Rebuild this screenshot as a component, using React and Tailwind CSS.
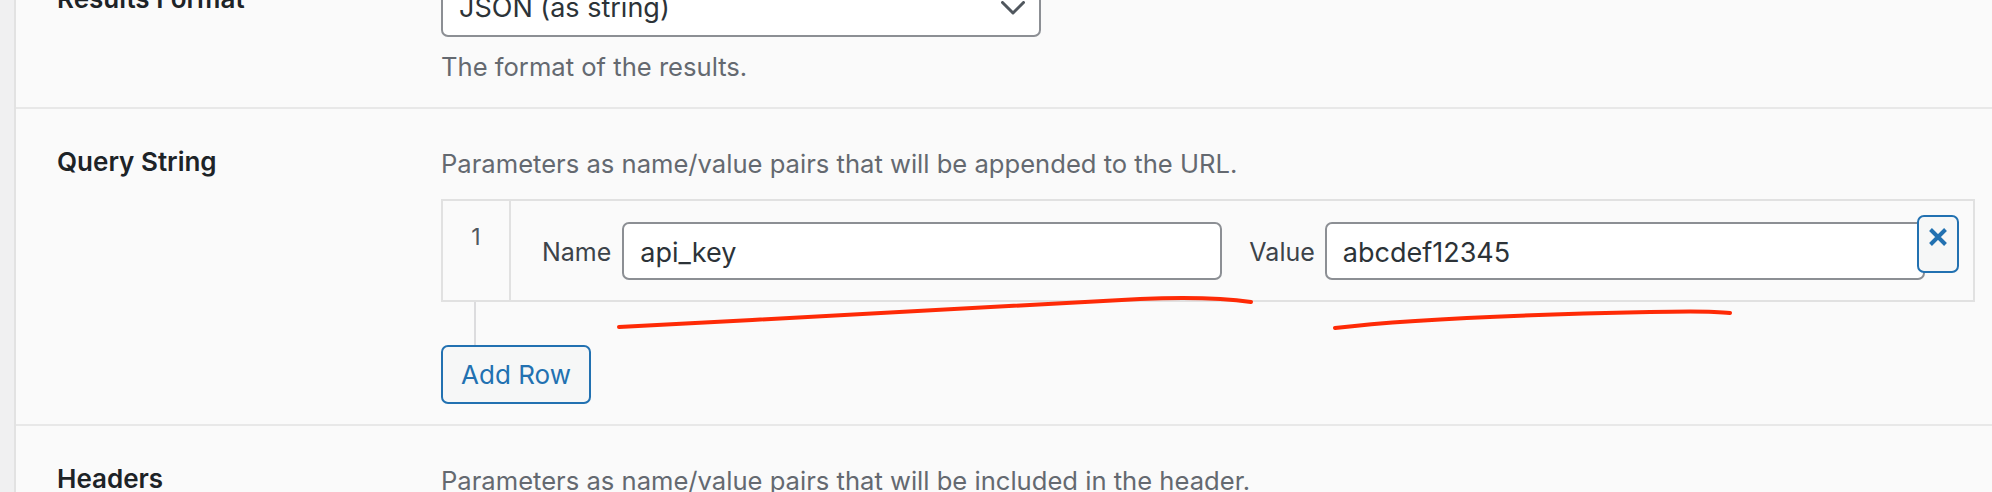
import React from "react";

const Section = ({ label, children, className = "", labelClass = "" }) => (
  <div className={`flex border-b-2 border-[#e8e8e8] pl-[41px] ${className}`}>
    <div className={`w-[384px] shrink-0 text-[26px] leading-[30px] font-semibold text-[#1d2327] ${labelClass}`}>
      {label}
    </div>
    <div className="flex-1">{children}</div>
  </div>
);

const Description = ({ children, className = "" }) => (
  <p className={`text-[25.6px] leading-[36px] text-[#646970] ${className}`}>{children}</p>
);

const TextField = ({ value }) => (
  <input
    readOnly
    value={value}
    className="w-[600px] h-[58px] shrink-0 rounded-[7px] border-2 border-[#8c8f94] bg-white px-[16px] pt-[3px] text-[27px] text-[#2c3338] outline-none"
  />
);

const App = () => {
  return (
    <div className="relative h-[492px] overflow-hidden bg-[#f0f0f1] pl-[14px] font-['Inter','Liberation_Sans',sans-serif]">
      <div className="flow-root h-full border-l-2 border-[#e2e2e2] bg-[#fafafa]">
        {/* Results Format */}
        <Section label="Results Format" className="-mt-[21px] pb-[22px]" labelClass="mt-[5px]">
          <div className="flex h-[58px] w-[600px] items-center justify-between rounded-[7px] border-2 border-[#8c8f94] bg-white pl-[16px] pr-[14px] text-[27px] text-[#2c3338]">
            <span>JSON (as string)</span>
            <svg width="24" height="14" viewBox="0 0 24 14" fill="none">
              <path d="M1.5 1.5 L12 12 L22.5 1.5" stroke="#50575e" strokeWidth="3" strokeLinecap="round" strokeLinejoin="round" />
            </svg>
          </div>
          <Description className="mt-[12px]">The format of the results.</Description>
        </Section>

        {/* Query String */}
        <Section label="Query String" className="pt-[38px] pb-[20px]">
          <Description className="-mt-[1px] mb-[17px]">
            Parameters as name/value pairs that will be appended to the URL.
          </Description>

          <div className="flex w-[1534px] border-2 border-[#e1e1e1]">
            <div className="w-[68px] shrink-0 border-r-2 border-[#e1e1e1] pt-[21px] text-center text-[23px] leading-[30px] text-[#50575e]">
              1
            </div>
            <div className="relative flex flex-1 items-center pl-[31px] pt-[21px] pb-[20px]">
              <span className="mr-[11px] pt-[4px] text-[25px] text-[#3c434a]">Name</span>
              <TextField value="api_key" />
              <span className="ml-[27px] mr-[10px] pt-[4px] text-[25px] text-[#3c434a]">Value</span>
              <TextField value="abcdef12345" />
              <button className="absolute right-[14px] top-[14px] flex h-[58px] w-[42px] justify-center rounded-[7px] border-2 border-[#2271b1] bg-[#f6f7f7] pt-[10px]">
                <svg width="20" height="20" viewBox="0 0 20 20">
                  <path d="M2.5 2.5 L17.5 17.5 M17.5 2.5 L2.5 17.5" stroke="#2271b1" strokeWidth="4" />
                </svg>
              </button>
            </div>
          </div>

          <div className="ml-[33px] h-[43px] w-[2px] bg-[#dcdcde]" />

          <button className="h-[59px] w-[150px] rounded-[7px] border-2 border-[#2271b1] bg-[#f6f7f7] text-[26px] text-[#2271b1]">
            Add Row
          </button>
        </Section>

        {/* Headers */}
        <Section label="Headers" className="pt-[38px]">
          <Description className="-mt-[1px]">
            Parameters as name/value pairs that will be included in the header.
          </Description>
        </Section>
      </div>

      {/* hand-drawn red underlines */}
      <svg className="pointer-events-none absolute left-0 top-0" width="1992" height="492" fill="none">
        <path
          d="M619 327 C 800 318, 1000 305, 1140 299 C 1190 297, 1230 299, 1251 302"
          stroke="#fe2a06"
          strokeWidth="4"
          strokeLinecap="round"
        />
        <path
          d="M1335 328 C 1400 320, 1500 315, 1650 312 C 1690 311, 1715 311, 1730 313"
          stroke="#fe2a06"
          strokeWidth="4"
          strokeLinecap="round"
        />
      </svg>
    </div>
  );
};

export default App;
